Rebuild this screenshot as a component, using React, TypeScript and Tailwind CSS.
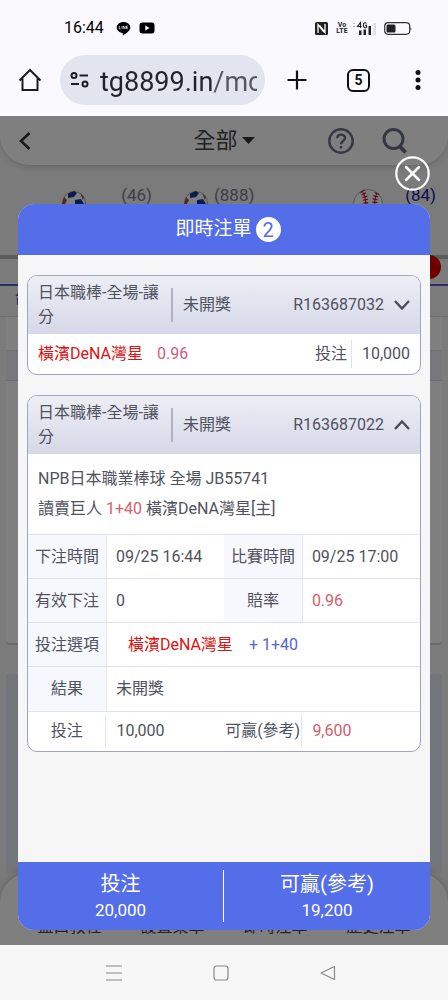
import React from 'react';
import { clsx } from 'clsx';

interface Bet {
  id: string;
  game: string;
  status: string;
  team: string;
  odds: string;
  stake: string;
  open?: boolean;
}

const bets: Bet[] = [
  { id: 'R163687032', game: '日本職棒-全場-讓分', status: '未開獎', team: '橫濱DeNA灣星', odds: '0.96', stake: '10,000' },
  { id: 'R163687022', game: '日本職棒-全場-讓分', status: '未開獎', team: '橫濱DeNA灣星', odds: '0.96', stake: '10,000', open: true },
];

function StatusBar() {
  return (
    <div className="flex h-11 items-end justify-between pl-16 pr-9">
      <div className="flex h-8 items-center gap-1 text-black">
        <span className="w-12 text-base">16:44</span>
        <svg width="15" height="15" viewBox="0 0 15 15">
          <path d="M7.5 1C3.7 1 .7 3.4.7 6.500c0 2.700 2.400 4.900 5.700 5.400.6.100.5.400.3 2 0 .4.200.5.600.3 2.500-1.500 7-4.200 7-7.700C14.300 3.400 11.300 1 7.500 1z" fill="#000" />
          <path d="M3.300 5v2.800h1.400M6 5v2.800M7.300 7.800V5l1.800 2.800V5M11.800 5h-1.300v2.800h1.300M10.500 6.400h1.200" fill="none" stroke="#fff" strokeWidth=".7" />
        </svg>
        <svg className="ml-1" width="16" height="12" viewBox="0 0 16 12">
          <rect x=".5" y=".5" width="15" height="11" rx="3" fill="#000" />
          <path d="M6.300 3.500v5l4.200-2.500z" fill="#fff" />
        </svg>
      </div>
      <div className="flex h-8 items-center text-[#222]">
        <svg width="13" height="13" viewBox="0 0 13 13">
          <rect width="13" height="13" rx="1.500" fill="#222" />
          <path d="M3 11V2.500l6 7.500M10 2v8.500L4.500 3.500" fill="none" stroke="#fff" strokeWidth="1.300" />
        </svg>
        <span className="ml-2 flex w-3 flex-col text-center text-[7px] leading-[6px] font-bold">
          <span>Vo</span>
          <span>LTE</span>
        </span>
        <svg className="ml-1" width="24" height="15" viewBox="0 0 24 15" fill="none">
          <path d="M1 3l1-1 1 1M1 5l1 1 1-1" stroke="#aaa" strokeWidth=".8" />
          <path d="M8.500 7V1.500L5.500 5.500h4.200M14.500 2.300C13 1 11.300 2 11.300 4.200c0 2.500 2 3 3.300 2V4.300H13" stroke="#222" strokeWidth="1.100" />
          <path d="M7 9.500h2.500V14H7zM11.500 8.500H14V14h-2.500zM16.500 5H19v9h-2.500z" fill="#222" />
          <path d="M21.500 2H24v12h-2.500z" fill="#ddd" />
        </svg>
        <svg className="ml-2" width="28" height="13" viewBox="0 0 28 13">
          <rect x=".7" y=".7" width="25" height="11.600" rx="3.500" fill="none" stroke="#333" strokeWidth="1.200" />
          <rect x="2.500" y="2.500" width="9" height="8" rx="1.500" fill="#222" />
          <path d="M26.500 4.500q1.500 2 0 4z" fill="#333" />
        </svg>
      </div>
    </div>
  );
}

function BrowserBar() {
  return (
    <div className="flex h-18 items-center pl-4">
      <button aria-label="Home" className="flex w-7 justify-center">
        <svg width="24" height="24" viewBox="0 0 24 24" fill="none" stroke="#1c1c22" strokeWidth="2">
          <path d="M1.500 12.500L12 2l10.500 10.500M4.500 10.500V22h15V10.500" />
        </svg>
      </button>
      <div className="ml-4 flex h-[50px] min-w-0 flex-1 items-center rounded-full bg-[#e2e4f0] pl-2.5 pr-2">
        <svg className="shrink-0" width="20" height="16" viewBox="0 0 20 16" fill="none" stroke="#1c1c22" strokeWidth="2">
          <circle cx="4" cy="3.500" r="2.500" />
          <path d="M9.500 3.500H18M1 12h8" />
          <circle cx="15" cy="12" r="2.500" />
        </svg>
        {/* the path after the host is drawn lighter */}
        <input
          aria-label="Address"
          readOnly
          value="tg8899.in/mobile"
          className="ml-2.5 w-full min-w-0 bg-linear-to-r from-[#22232a] from-[113px] to-[#55565f] to-[113px] bg-clip-text pt-1 text-[27px] text-transparent outline-none"
        />
      </div>
      <button aria-label="New tab" className="ml-5 flex w-6 justify-center">
        <svg width="20" height="20" viewBox="0 0 20 20" stroke="#111" strokeWidth="2.200">
          <path d="M10 .5v19M.5 10h19" />
        </svg>
      </button>
      <button aria-label="Tabs" className="ml-[38px] flex size-[23px] items-center justify-center rounded-md border-2 border-[#111] text-sm font-bold text-[#111]">5</button>
      <button aria-label="Menu" className="ml-9 mr-[18px] flex w-6 justify-center">
        <svg width="6" height="20" viewBox="0 0 6 20" fill="#111">
          <circle cx="3" cy="2.500" r="2.500" />
          <circle cx="3" cy="10" r="2.500" />
          <circle cx="3" cy="17.500" r="2.500" />
        </svg>
      </button>
    </div>
  );
}

function SoccerBall() {
  return (
    <svg width="24" height="24" viewBox="0 0 24 24">
      <circle cx="12" cy="12" r="11.500" fill="#fff" stroke="#aaa" />
      <path d="M6 2.500L12 0l3 2-3 4-6 1zM13 9l6-1 3 5-3 5-6-2z" fill="#103a9c" />
      <path d="M2 6l3 3-3 6-2-2zM18 2l4 4-1 3z" fill="#9c5040" />
    </svg>
  );
}

function Baseball() {
  return (
    <svg width="30" height="30" viewBox="0 0 30 30">
      <circle cx="15" cy="15" r="14.500" fill="#fff" stroke="#aaa" />
      <path d="M9 2c5 6 5 20 0 26M24 4c-3 6-3 16 0 22" fill="none" stroke="#c4102c" strokeWidth="1" />
      <path d="M9 2c5 6 5 20 0 26M24 4c-3 6-3 16 0 22" fill="none" stroke="#c4102c" strokeWidth="5" strokeDasharray="1.200 1.800" />
    </svg>
  );
}

// Betting lobby that stays behind the dialog
function Lobby() {
  return (
    <div aria-hidden="true" className="col-start-1 row-start-1 flex min-w-0 flex-col overflow-hidden bg-[#f6f6f8]">
      <div className="grid h-[49px] grid-cols-3 items-center rounded-b-[30px] bg-white px-4 shadow-md">
        <svg width="20" height="20" viewBox="0 0 20 20" fill="none" stroke="#333" strokeWidth="2.600">
          <path d="M13.500 2L5 10l8.500 8" />
        </svg>
        <div className="flex items-center justify-center gap-1 text-[22px] text-[#444]">
          全部
          <svg width="13" height="7" viewBox="0 0 13 7" fill="#333">
            <path d="M0 0h13L6.500 7z" />
          </svg>
        </div>
        <div className="flex items-center justify-end gap-7 pr-6">
          <svg width="26" height="26" viewBox="0 0 26 26" fill="none" stroke="#6a6c88" strokeWidth="2.400">
            <circle cx="13" cy="13" r="11.700" />
            <path d="M9.300 10.300C9.300 5.500 17 5.500 17 10c0 3-4 3-4 6.200M13 18v2.600" />
          </svg>
          <svg width="26" height="26" viewBox="0 0 26 26" fill="none" stroke="#6a6c88">
            <circle cx="11.500" cy="11" r="9.500" strokeWidth="3" />
            <path d="M17 17.500l6.500 7" strokeWidth="4" />
          </svg>
        </div>
      </div>
      <div className="flex h-[90px] items-start pl-[62px] pr-3 pt-[18px] text-[17px] text-[#7c7c8a]">
        <div className="flex w-[122px] justify-between pr-8">
          <span className="pt-2"><SoccerBall /></span>
          <span>(46)</span>
        </div>
        <div className="flex gap-1.5">
          <span className="pt-2"><SoccerBall /></span>
          <span>(888)</span>
        </div>
        <div className="ml-auto flex gap-[22px] text-[#2020a8]">
          <span className="pt-1.5"><Baseball /></span>
          <span>(84)</span>
        </div>
      </div>
      <div className="flex h-[31px] items-start justify-end border-b-2 border-[#5060d8] border-t-4 border-t-[#b8b8b8] pr-[7px]">
        <span className="-mt-1 size-6 rounded-full bg-[#e00000]" />
      </div>
      <div className="h-[31px] border-b border-[#dcdce4] pl-3.5 text-base text-[#5060d8]">台</div>
      <div className="mx-1.5 h-[34px] border-b border-[#dcdce4] bg-white" />
      <div className="mx-1.5 h-[30px] border-b border-[#d4d4e4] bg-[#f0f0f6]" />
      <div className="mx-1.5 h-[264px] rounded-b-sm border-b-2 border-[#d8d8e0] bg-white" />
      <div className="h-[29px]" />
      <div className="mx-1.5 flex-1 bg-[#e8e8f6]" />
      <div className="grid h-[72px] grid-cols-4 items-center rounded-t-[30px] bg-white px-[18px] pt-9 text-center text-base text-[#444] shadow-[0_-2px_8px_#00000030]">
        <span>盤口教程</span>
        <span>設置菜單</span>
        <span>即時注單</span>
        <span>歷史注單</span>
      </div>
    </div>
  );
}

function Chevron({ up }: { up?: boolean }) {
  return (
    <svg width="16" height="10" viewBox="0 0 16 10" fill="none" stroke="#4a4c5a" strokeWidth="2.400">
      <path d={up ? 'M1 9l7-7.500L15 9' : 'M1 1l7 7.500L15 1'} />
    </svg>
  );
}

function BetDetails({ bet }: { bet: Bet }) {
  const label = 'border-r border-[#e4e5f0] bg-[#f7f8fd] p-0 text-center font-normal whitespace-nowrap';
  const value = 'py-0 pl-[9px] text-left whitespace-nowrap';
  return (
    <>
      <div className="px-2.5 py-2.5 leading-[30px]">
        <p>NPB日本職業棒球 全場 JB55741</p>
        <p>讀賣巨人 <span className="text-[#d4606e]">1+40</span> 橫濱DeNA灣星[主]</p>
      </div>
      <table className="w-full table-fixed border-collapse">
        <colgroup>
          <col className="w-1/5" />
          <col className="w-[30%]" />
          <col className="w-1/5" />
          <col className="w-[30%]" />
        </colgroup>
        <tbody>
          <tr className="h-11 border-t border-[#e0e1ee]">
            <th scope="row" className={label}>下注時間</th>
            <td className={value}>09/25 16:44</td>
            <th scope="row" className={label}>比賽時間</th>
            <td className={value}>09/25 17:00</td>
          </tr>
          <tr className="h-11 border-t border-[#e0e1ee]">
            <th scope="row" className={label}>有效下注</th>
            <td className={value}>0</td>
            <th scope="row" className={label}>賠率</th>
            <td className={clsx(value, 'text-[#d4606e]')}>{bet.odds}</td>
          </tr>
          <tr className="h-11 border-t border-[#e0e1ee]">
            <th scope="row" className={label}>投注選項</th>
            <td colSpan={3} className="py-0 pl-[21px] text-[#e01010]">
              {bet.team}<span className="ml-4 text-[#5566cc]">+ 1+40</span>
            </td>
          </tr>
          <tr className="h-11 border-t border-[#e0e1ee]">
            <th scope="row" className={label}>結果</th>
            <td colSpan={3} className={value}>{bet.status}</td>
          </tr>
        </tbody>
      </table>
      <dl className="grid h-10 grid-cols-[20%_30%_20%_30%] items-center border-t border-[#e0e1ee] whitespace-nowrap">
        <dt className="border-r border-[#e4e5f0] py-1 text-center">投注</dt>
        <dd className="pl-2.5">{bet.stake}</dd>
        <dt className="border-r border-[#e4e5f0] py-1 text-center">可贏(參考)</dt>
        <dd className="pl-2.5 text-[#d4606e]">9,600</dd>
      </dl>
    </>
  );
}

function BetCard({ bet }: { bet: Bet }) {
  return (
    <section className="overflow-hidden rounded-[10px] border border-[#a0a3c4] bg-white text-base text-[#50525e]">
      <button aria-expanded={!!bet.open} className="flex h-[58px] w-full items-center bg-linear-to-b from-[#edeef5] to-[#d6d8e8] px-2.5 text-left">
        <span className="w-[133px] shrink-0 pr-2 leading-6">{bet.game}</span>
        <span className="h-[34px] w-0.5 bg-[#b0b2c4]" />
        <span className="ml-2.5">{bet.status}</span>
        <span className="ml-auto mr-2.5">{bet.id}</span>
        <Chevron up={bet.open} />
      </button>
      {bet.open ? (
        <BetDetails bet={bet} />
      ) : (
        <div className="flex h-10 items-center px-2.5">
          <span className="text-[#e01010]">{bet.team}</span>
          <span className="ml-3.5 text-[#c8607c]">{bet.odds}</span>
          <span className="ml-auto border-r border-[#e0e1ee] py-0.5 pr-1">投注</span>
          <span className="ml-2.5">{bet.stake}</span>
        </div>
      )}
    </section>
  );
}

function BetDialog() {
  return (
    <div className="relative z-10 col-start-1 row-start-1 flex min-w-0 flex-col bg-black/50 px-[18px] pb-[15px] pt-[88px]">
      <button aria-label="Close" className="absolute right-[18px] top-10">
        <svg width="35" height="35" viewBox="0 0 35 35" fill="none" stroke="#fff" strokeWidth="2.200">
          <circle cx="17.500" cy="17.500" r="16.200" />
          <path d="M11 11l13 13M24 11L11 24" strokeWidth="2.500" strokeLinecap="round" />
        </svg>
      </button>
      <div role="dialog" aria-labelledby="bets-title" className="flex flex-1 flex-col overflow-hidden rounded-2xl bg-[#f6f6f7]">
        <header className="flex h-[51px] items-center justify-center gap-1 bg-[#546de8] pl-2 text-white">
          <h1 id="bets-title" className="text-[19px]">即時注單</h1>
          <span className="flex size-[25px] items-center justify-center rounded-full bg-white text-xl text-[#546de8]">2</span>
        </header>
        <div className="flex flex-1 flex-col gap-5 px-[9px] py-5">
          {bets.map((bet) => (
            <BetCard key={bet.id} bet={bet} />
          ))}
        </div>
        <footer className="grid h-[68px] grid-cols-2 items-center bg-[#546de8] text-center text-white">
          <div className="border-r border-white">
            <p className="text-xl leading-7">投注</p>
            <p className="text-[17px] leading-6">20,000</p>
          </div>
          <div>
            <p className="text-xl leading-7">可贏(參考)</p>
            <p className="text-[17px] leading-6">19,200</p>
          </div>
        </footer>
      </div>
    </div>
  );
}

function SystemNav() {
  return (
    <nav className="flex h-[55px] items-center justify-center gap-[91px] bg-[#f7f7f7] pr-1.5">
      <button aria-label="Recent apps">
        <svg width="16" height="16" viewBox="0 0 16 16" stroke="#888" strokeWidth="1.200">
          <path d="M0 1h16M0 8h16M0 15h16" />
        </svg>
      </button>
      <button aria-label="Home screen">
        <svg width="16" height="16" viewBox="0 0 16 16" fill="none" stroke="#888" strokeWidth="1.200">
          <rect x="1" y="1" width="14" height="14" rx="2.500" />
        </svg>
      </button>
      <button aria-label="Back">
        <svg width="16" height="16" viewBox="0 0 16 16" fill="none" stroke="#888" strokeWidth="1.200" strokeLinejoin="round">
          <path d="M14.500 1.500v13L1 8z" />
        </svg>
      </button>
    </nav>
  );
}

export default function App() {
  return (
    <div className="flex min-h-screen flex-col bg-[#faf9fe] font-[Roboto,'Noto_Sans_CJK_TC',sans-serif]">
      <div>
        <StatusBar />
        <BrowserBar />
      </div>
      <main className="grid flex-1">
        <Lobby />
        <BetDialog />
      </main>
      <SystemNav />
    </div>
  );
}
